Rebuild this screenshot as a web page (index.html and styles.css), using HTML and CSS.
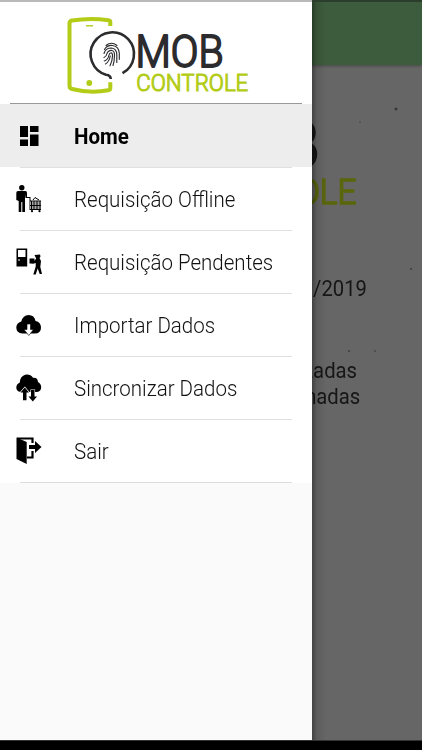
FILE: index.html
```html
<!DOCTYPE html>
<html lang="pt-BR">
<head>
<meta charset="utf-8">
<title>Mob Controle</title>
<link rel="stylesheet" href="styles.css">
</head>
<body>
<svg width="0" height="0" class="defs">
  <symbol id="logo" viewBox="66 14 184 82">
    <g fill="none" stroke="#b3cc18" stroke-width="4" stroke-linecap="butt" stroke-linejoin="round">
      <path d="M110.3 26v-4q0-1.500-2-1.800Q90 17.500 72 20.500q-2.500.500-2.500 3v62q0 3 2.500 3.500Q90 93.500 108.300 90.300q2-.300 2-2v-6"/>
      <path d="M86 25.800h7" stroke-width="1.400"/>
    </g>
    <circle cx="89.300" cy="83" r="2.900" fill="#b3cc18"/>
    <path d="M122.500 73.200A21.700 21.700 0 1 0 106 74.800q4.700.600 4.700 4.200" fill="none" stroke="#2c2b2e" stroke-width="2.600"/>
    <g fill="none" stroke="#2c2b2e" stroke-width="1.150" stroke-linecap="round">
      <path d="M106 45.500q5.500-4.500 11 0M104.500 49.500q2.500-4.500 8-4 6.500 1 6.800 7.800v6M104 53.500q1.500-5.500 7.500-5.500 5 .500 5.300 6.500v8M104 57.500q2.500-1 3-4 1.200-3.200 4.500-3.200 3 .700 3 4.700 0 6-1.500 10.500M104.300 61q4-1.500 4.700-6 .500-2.300 2.200-2.300 1.500.500 1.300 3.500-.200 5-2.500 9.500M105.500 64q3.500-2 4.800-8"/>
    </g>
    <text class="logo-mob" x="135.500" y="66.500" textLength="88" lengthAdjust="spacingAndGlyphs">MOB</text>
    <text class="logo-controle" x="136.300" y="91.300" textLength="112" lengthAdjust="spacingAndGlyphs">CONTROLE</text>
  </symbol>
</svg>
<div class="screen">
  <main class="page">
    <div class="toolbar"></div>
    <div class="content">
      <svg class="page-logo"><use href="#logo"/></svg>
      <p class="date">/2019</p>
      <p class="count first">zadas</p>
      <p class="count second">nadas</p>
    </div>
  </main>
  <div class="scrim"></div>
  <aside class="drawer">
    <header class="brand"><svg class="brand-logo"><use href="#logo"/></svg></header>
    <nav class="menu">
      <a class="item active"><svg class="icon" viewBox="0 0 26 28"><path d="M4 4h8v11H4zM14 4h8.500v6H14zM4 17.500h8V24H4zM14 12.500h8.500V24H14z"/></svg><span>Home</span></a>
      <a class="item"><svg class="icon" viewBox="0 0 26 28"><circle cx="5.800" cy="2.800" r="2.700"/><path d="M2 6h7.500q1.500 0 1.500 2v4h3.500v13h-1V13H9.500L9 9v18H6.300V17h-1v10H2.700V16L.300 15V8q0-2 1.700-2z"/><path d="M14 16.500h11v8H14z" fill="#aaa"/><path d="M14 16h11M14 20.500h11M14 24.500h11M15.500 16v9M18 16v9M21 16v9M24 16v9M17 15l2-2.500 4 2.500" fill="none" stroke="#000"/><circle cx="16" cy="26.200" r="1.100"/><circle cx="23.500" cy="26.200" r="1.100"/></svg><span>Requisição Offline</span></a>
      <a class="item"><svg class="icon" viewBox="0 0 26 28"><path fill-rule="evenodd" d="M.500.500h10.700v18H.500zM2 2v7h7.500V2zM2 11.500v1h2v-1z"/><path d="M13.500 10.500h5v5h-5z"/><path d="M18.500 7l5.500-.500.500 2-1 1.500 1.500 3-.700 6 1.700 7h-2.300l-2-5.500-2 6h-2.400l2.400-8V15l-4 .500-.500-1.500 3.500-1.500 1.500-2z"/></svg><span>Requisição Pendentes</span></a>
      <a class="item"><svg class="icon" viewBox="0 0 26 28"><path d="M6.500 22.500Q.300 22 .300 16.500q0-4.500 5-6Q7 4 12.500 4q6 0 7 6 5.500 1.200 5.500 6.700 0 5.800-6.500 5.800z"/><path fill="#fff" stroke="#000" stroke-width=".6" d="M11 13h3.500v5.500h3l-4.700 6-4.800-6h3z"/></svg><span>Importar Dados</span></a>
      <a class="item"><svg class="icon" viewBox="0 0 26 28"><path d="M4.500 18Q.300 17.300.300 13.500q0-3.500 3.500-5Q4 2.500 9 .700q5-1.300 8 3 4.800-.500 5 4.300 3.200 2 3.200 5.300 0 4.200-4.200 4.700z"/><g stroke="#fff" stroke-width="1.200" paint-order="stroke"><path d="M8.800 13.500l4.200 5h-2.500v7.700H7v-7.700H4.500z"/><path d="M15 16h3.500v6.500H21l-4.200 5-4.300-5H15z"/></g></svg><span>Sincronizar Dados</span></a>
      <a class="item"><svg class="icon" viewBox="0 0 26 28"><path d="M.500.500L10.700 5v22L.500 22z"/><path d="M1 1.500h15.500V6M16.500 14v6.500H11" fill="none" stroke="#000" stroke-width="2.200"/><path d="M13 8h6V4l6.500 6-6.500 6v-4h-6z"/></svg><span>Sair</span></a>
    </nav>
  </aside>
  <div class="status"></div>
  <div class="navbar"></div>
</div>
</body>
</html>
```
FILE: styles.css
```css
* { box-sizing: border-box; }
body { margin: 0; font-family: Roboto, sans-serif; }
.defs { position: absolute; }
.screen { position: relative; width: 422px; height: 750px; overflow: hidden; background: #000; }
.page { height: 740px; display: flex; flex-direction: column; background: #666; isolation: isolate; }
.toolbar { height: 65px; flex: none; background: #3d5c3d; box-shadow: 0 1px 3px rgba(0,0,0,.3); z-index: 1; }
.content {
  flex: 1; display: flex; flex-direction: column; align-items: flex-end;
  background:
    radial-gradient(circle at 396px 44px, #383838 0 .8px, transparent 2px),
    radial-gradient(circle at 360px 57px, #555 0 .7px, transparent 1.500px),
    radial-gradient(circle at 411px 204px, #484848 0 .7px, transparent 1.600px),
    radial-gradient(circle at 349px 286px, #484848 0 .7px, transparent 1.600px),
    radial-gradient(circle at 375px 286px, #505050 0 .7px, transparent 1.600px),
    #666;
}
.page-logo { width: 276px; height: 123px; margin: 23px 63px 0 0; filter: brightness(.5); }
.logo-mob { font: 300 43.500px Roboto, sans-serif; fill: #2c2b2e; stroke: #2c2b2e; stroke-width: 1.900px; stroke-linejoin: round; }
.logo-controle { font: 300 23.500px Roboto, sans-serif; fill: #b3cc18; stroke: #b3cc18; stroke-width: 1.100px; stroke-linejoin: round; }
.date, .count { margin: 0; font-size: 21.800px; line-height: 26px; color: #161616; transform: scaleX(.93); transform-origin: right; }
.date { margin: 65px 55px 0 0; }
.first { margin: 56px 65px 0 0; }
.second { margin-right: 62px; }
.scrim { position: absolute; top: 0; left: 312px; width: 14px; height: 740px; background: linear-gradient(90deg, rgba(0,0,0,.35), rgba(0,0,0,.1) 35%, transparent); }
.drawer { position: absolute; top: 0; left: 0; width: 312px; height: 740px; background: #fafafa; }
.brand { height: 104px; padding: 14px 0 0 66px; background: linear-gradient(#999, #999) 10px 103px / 292px 1px no-repeat, #fff; }
.brand-logo { display: block; width: 184px; height: 82px; }
.menu { padding-bottom: 1px; background: linear-gradient(#dcdcdc, #dcdcdc) 20px 100% / 272px 1px no-repeat, #fff; display: flex; flex-direction: column; }
.item { display: flex; align-items: center; height: 63px; padding-left: 16px; font-size: 22px; font-weight: 300; color: #111; background: linear-gradient(#e0e0e0, #e0e0e0) 20px 0 / 272px 1px no-repeat; }
.item span { padding-top: 1px; transform: scaleX(.932); transform-origin: left; }
.icon { width: 26px; height: 28px; margin-right: 32px; flex: none; }
.active { background: #ededed; font-weight: 700; color: #000; }
.status { position: absolute; top: 0; left: 0; width: 422px; height: 2px; background: linear-gradient(90deg, #b9b9b9 312px, #2b3d2b 312px); }
.navbar { position: absolute; left: 0; bottom: 0; width: 422px; height: 10px; background: #000; border-top: 1px solid #333; }
```
